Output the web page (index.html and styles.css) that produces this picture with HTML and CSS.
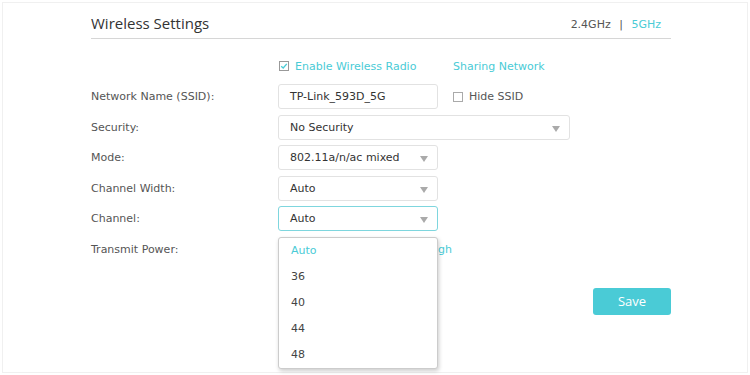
FILE: index.html
```html
<!DOCTYPE html>
<html lang="en">
<head>
    <meta charset="UTF-8">
    <title>Wireless Settings</title>
    <link rel="stylesheet" href="styles.css">
</head>
<body>
    <div class="panel">
        <div class="content">
            <div class="title-bar">
                <h2>Wireless Settings</h2>
                <div class="bands">
                    <span>2.4GHz</span>
                    <span class="sep">|</span>
                    <span class="active">5GHz</span>
                </div>
            </div>

            <div class="row check-row">
                <div class="label"></div>
                <label class="check checked">
                    <span class="box">
                        <svg width="8" height="8" viewBox="0 0 8 8"><path d="M1.2 4.2 L3.2 6 L6.8 1.8" fill="none" stroke="#4acbd6" stroke-width="1.3"/></svg>
                    </span>
                    Enable Wireless Radio
                </label>
                <a class="link">Sharing Network</a>
            </div>

            <div class="row">
                <div class="label">Network Name (SSID):</div>
                <div class="field short">TP-Link_593D_5G</div>
                <label class="check plain"><span class="box"></span>Hide SSID</label>
            </div>

            <div class="row">
                <div class="label">Security:</div>
                <div class="field select long">No Security</div>
            </div>

            <div class="row">
                <div class="label">Mode:</div>
                <div class="field select short">802.11a/n/ac mixed</div>
            </div>

            <div class="row">
                <div class="label">Channel Width:</div>
                <div class="field select short">Auto</div>
            </div>

            <div class="row">
                <div class="label">Channel:</div>
                <div class="select-wrap">
                    <div class="field select short focused">Auto</div>
                    <ul class="options">
                        <li class="current">Auto</li>
                        <li>36</li>
                        <li>40</li>
                        <li>44</li>
                        <li>48</li>
                    </ul>
                </div>
            </div>

            <div class="row">
                <div class="label">Transmit Power:</div>
                <div class="power">
                    <span>Low</span>
                    <span>Middle</span>
                    <span class="on">High</span>
                </div>
            </div>

            <div class="actions">
                <button class="btn">Save</button>
            </div>
        </div>
    </div>
</body>
</html>
```

FILE: styles.css
```css
* {
    box-sizing: border-box;
    margin: 0;
    padding: 0;
}

body {
    font-family: 'DejaVu Sans', Verdana, sans-serif;
    font-size: 11px;
    color: #555;
    background: #fff;
}

.panel {
    margin: 2px;
    height: 371px;
    border: 1px solid #f0f0f0;
}

.content {
    width: 580px;
    margin-left: 88px;
}

.title-bar {
    display: flex;
    align-items: flex-end;
    justify-content: space-between;
    height: 36px;
    padding-bottom: 5px;
    border-bottom: 1px solid #d6d6d6;
    margin-bottom: 19px;
}

h2 {
    font-family: 'Open Sans', sans-serif;
    font-size: 15px;
    font-weight: 400;
    color: #333;
    line-height: 20px;
}

.bands {
    font-size: 11px;
    color: #555;
    padding-right: 10px;
    padding-bottom: 2px;
}

.bands .sep {
    margin: 0 5px;
}

.bands .active {
    color: #4acbd6;
}

.row {
    display: flex;
    align-items: center;
    height: 25px;
    margin-bottom: 5.5px;
}

.check-row {
    height: 16px;
    margin-bottom: 10px;
}

.label {
    width: 187px;
    flex-shrink: 0;
}

.check {
    display: flex;
    align-items: center;
    gap: 6px;
}

.check.checked {
    color: #4acbd6;
    margin-left: 1px;
    width: 174px;
}

.check.plain {
    margin-left: 15px;
}

.box {
    width: 10px;
    height: 10px;
    border: 1px solid #aaa;
    display: flex;
    align-items: center;
    justify-content: center;
    background: #fff;
}

.checked .box {
    border-color: #999;
}

.link {
    color: #4acbd6;
}

.field {
    height: 25px;
    border: 1px solid #e2e2e2;
    border-radius: 3px;
    padding: 0 11px;
    display: flex;
    align-items: center;
    color: #333;
    position: relative;
    background: #fff;
}

.field.short {
    width: 160px;
}

.field.long {
    width: 292px;
}

.select::after {
    content: '';
    position: absolute;
    right: 9px;
    top: 10px;
    border-left: 4.5px solid transparent;
    border-right: 4.5px solid transparent;
    border-top: 6px solid #aaa;
}

.field.focused {
    border-color: #7ed6de;
}

.select-wrap {
    position: relative;
}

.options {
    list-style: none;
    position: absolute;
    left: 0;
    top: 31px;
    width: 160px;
    background: #fff;
    border: 1px solid #ccc;
    border-radius: 3px;
    box-shadow: 1px 2px 4px rgba(0, 0, 0, 0.2);
    z-index: 2;
}

.options li {
    height: 26px;
    line-height: 26px;
    padding-left: 12px;
    color: #444;
}

.options li.current {
    color: #4acbd6;
}

.power {
    display: flex;
    justify-content: flex-end;
    gap: 20px;
    width: 174px;
}

.power .on {
    color: #4acbd6;
}

.actions {
    display: flex;
    justify-content: flex-end;
    margin-top: 26px;
}

.btn {
    width: 78px;
    height: 27px;
    background: #4acbd6;
    color: #fff;
    border: none;
    border-radius: 3px;
    font-family: 'Open Sans', sans-serif;
    font-size: 13px;
}
```
